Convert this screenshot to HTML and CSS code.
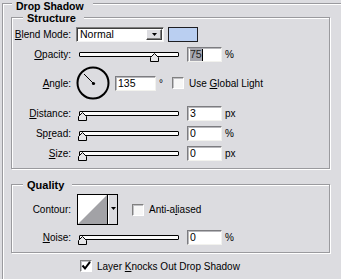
FILE: index.html
```html
<!DOCTYPE html>
<html>
<head>
<meta charset="utf-8">
<link rel="stylesheet" href="styles.css">
</head>
<body>
<div class="panel">
  <div class="group outer">
    <div class="legend l-outer">Drop Shadow</div>

    <div class="group sub structure">
      <div class="legend l-sub">Structure</div>

      <div class="row r-blend">
        <span class="lbl"><u>B</u>lend Mode:</span>
        <div class="select">
          <span class="sel-text">Normal</span>
          <span class="sel-btn"><svg width="5" height="3" viewBox="0 0 5 3"><path d="M0 0H5L2.5 3Z" fill="#000"/></svg></span>
        </div>
        <div class="swatch"></div>
      </div>

      <div class="row r-opacity">
        <span class="lbl"><u>O</u>pacity:</span>
        <div class="slider">
          <div class="track"></div>
          <svg class="thumb" style="left:71px" width="9" height="9" viewBox="0 0 9 9"><path d="M0.5 8.5V4.5L4.5 0.5L8.5 4.5V8.5Z" fill="#e6e6e8" stroke="#000"/></svg>
        </div>
        <div class="field"><span class="hl">75</span><span class="caret"></span></div>
        <span class="unit">%</span>
      </div>

      <div class="row r-angle">
        <span class="lbl"><u>A</u>ngle:</span>
        <svg class="dial" width="34" height="34" viewBox="0 0 34 34">
          <circle cx="17" cy="17" r="15.5" fill="none" stroke="#000" stroke-width="2"/>
          <line x1="17.5" y1="17.5" x2="8" y2="8" stroke="#000" stroke-width="1"/>
          <circle cx="17.5" cy="17.5" r="1.6" fill="#000"/>
        </svg>
        <div class="field f-angle">135</div>
        <span class="deg">°</span>
        <span class="check c-global"></span>
        <span class="ctext">Use <u>G</u>lobal Light</span>
      </div>

      <div class="row r-dist">
        <span class="lbl"><u>D</u>istance:</span>
        <div class="slider">
          <div class="track"></div>
          <svg class="thumb" style="left:-1px" width="9" height="9" viewBox="0 0 9 9"><path d="M0.5 8.5V4.5L4.5 0.5L8.5 4.5V8.5Z" fill="#e6e6e8" stroke="#000"/></svg>
        </div>
        <div class="field">3</div>
        <span class="unit">px</span>
      </div>

      <div class="row r-spread">
        <span class="lbl">Sp<u>r</u>ead:</span>
        <div class="slider">
          <div class="track"></div>
          <svg class="thumb" style="left:-1px" width="9" height="9" viewBox="0 0 9 9"><path d="M0.5 8.5V4.5L4.5 0.5L8.5 4.5V8.5Z" fill="#e6e6e8" stroke="#000"/></svg>
        </div>
        <div class="field">0</div>
        <span class="unit">%</span>
      </div>

      <div class="row r-size">
        <span class="lbl"><u>S</u>ize:</span>
        <div class="slider">
          <div class="track"></div>
          <svg class="thumb" style="left:-1px" width="9" height="9" viewBox="0 0 9 9"><path d="M0.5 8.5V4.5L4.5 0.5L8.5 4.5V8.5Z" fill="#e6e6e8" stroke="#000"/></svg>
        </div>
        <div class="field">0</div>
        <span class="unit">px</span>
      </div>
    </div>

    <div class="group sub quality">
      <div class="legend l-sub l-quality">Quality</div>

      <div class="row r-contour">
        <span class="lbl">Contour:</span>
        <div class="contour">
          <svg class="curve" width="29" height="29" viewBox="0 0 29 29"><rect width="29" height="29" fill="#fff"/><path d="M0 29L29 0V29Z" fill="#a2a2a6"/></svg>
          <span class="c-btn"><svg width="5" height="3" viewBox="0 0 5 3"><path d="M0 0H5L2.5 3Z" fill="#000"/></svg></span>
        </div>
        <span class="check c-anti"></span>
        <span class="ctext">Anti-a<u>l</u>iased</span>
      </div>

      <div class="row r-noise">
        <span class="lbl"><u>N</u>oise:</span>
        <div class="slider">
          <div class="track"></div>
          <svg class="thumb" style="left:-1px" width="9" height="9" viewBox="0 0 9 9"><path d="M0.5 8.5V4.5L4.5 0.5L8.5 4.5V8.5Z" fill="#e6e6e8" stroke="#000"/></svg>
        </div>
        <div class="field">0</div>
        <span class="unit">%</span>
      </div>
    </div>

    <div class="row r-knock">
      <span class="check checked"><svg width="10" height="10" viewBox="0 0 10 10"><path d="M1.5 4.5L4 7.5L9 0.8" fill="none" stroke="#000" stroke-width="2"/></svg></span>
      <span class="ctext">Layer <u>K</u>nocks Out Drop Shadow</span>
    </div>
  </div>
</div>
</body>
</html>
```

FILE: styles.css
```css
html, body {
  margin: 0;
  padding: 0;
  background: #dcdce0;
  overflow: hidden;
}

body {
  font-family: "Liberation Sans", Arial, sans-serif;
  font-size: 10px;
  color: #000;
  width: 341px;
  height: 279px;
}

.panel {
  padding: 3px 0 0 2px;
}

.group {
  display: flex;
  flex-direction: column;
  border: 1px solid #9a9a9e;
  box-shadow: inset 1px 1px 0 #fff, 1px 1px 0 #fff;
}

.outer {
  width: 400px;
  min-height: 300px;
  box-sizing: border-box;
}

.sub {
  width: 319px;
  box-sizing: border-box;
  margin-left: 8px;
}

.structure {
  margin-top: 13px;
  padding-bottom: 7px;
}

.quality {
  margin-top: 15px;
  padding-bottom: 7px;
}

.legend {
  align-self: flex-start;
  height: 13px;
  line-height: 13px;
  margin-top: -6px;
  margin-bottom: -7px;
  background: #dcdce0;
  font-weight: bold;
  font-size: 11px;
  white-space: nowrap;
}

.l-outer {
  font-size: 10.5px;
  height: 12px;
  line-height: 12px;
  margin-top: -4px;
  margin-bottom: -8px;
  margin-left: 9px;
  padding: 0 9px 0 4px;
}

.l-sub {
  margin-left: 11px;
  padding: 0 8px 0 4px;
}

.l-quality {
  padding-right: 8px;
}

.row {
  display: flex;
  align-items: center;
  height: 15px;
  white-space: nowrap;
}

.lbl {
  width: 59px;
  flex: none;
  text-align: right;
  line-height: 15px;
}

u {
  text-decoration-thickness: 1px;
  text-underline-offset: 1px;
}

.r-blend { margin-top: 9px; }
.r-opacity { margin-top: 5px; }
.r-angle { margin-top: 4px; height: 34px; }
.r-dist { margin-top: 6px; }
.r-spread { margin-top: 5px; }
.r-size { margin-top: 5px; }
.r-contour { margin-top: 9px; height: 31px; }
.r-noise { margin-top: 5px; }
.r-knock { margin-top: 7px; height: 12px; padding-left: 77px; }

/* select */
.select {
  margin-left: 5px;
  width: 88px;
  height: 15px;
  box-sizing: border-box;
  display: flex;
  align-items: center;
  background: #fff;
  border: 1px solid;
  border-color: #808080 #f4f4f4 #f4f4f4 #808080;
  box-shadow: inset 1px 1px 0 #404040;
}

.sel-text {
  flex: 1;
  padding-left: 3px;
  line-height: 13px;
  font-size: 10.5px;
}

.sel-btn {
  width: 16px;
  height: 11px;
  box-sizing: border-box;
  margin-right: 1px;
  display: flex;
  align-items: center;
  justify-content: center;
  background: #dcdce0;
  border: 1px solid;
  border-color: #fff #404040 #404040 #fff;
  box-shadow: inset -1px -1px 0 #808080;
}

.swatch {
  margin-left: 4px;
  width: 30px;
  height: 15px;
  box-sizing: border-box;
  background: #bacff1;
  border: 1px solid #1e1e22;
}

/* slider */
.slider {
  position: relative;
  margin-left: 8px;
  width: 100px;
  height: 5px;
  flex: none;
}

.track {
  height: 5px;
  box-sizing: border-box;
  border: 1px solid #000;
  border-radius: 1px;
  background: #fbfbfb;
}

.thumb {
  position: absolute;
  top: 1px;
}

/* fields */
.field {
  margin-left: 8px;
  width: 35px;
  height: 15px;
  box-sizing: border-box;
  flex: none;
  display: flex;
  align-items: center;
  padding-left: 2px;
  background: #fff;
  border: 1px solid;
  border-color: #7c7c80 #f2f2ee #f2f2ee #7c7c80;
  box-shadow: inset 1px 1px 0 #b8b8bc;
  line-height: 13px;
  font-size: 10.5px;
}

.hl {
  background: #a6a6ae;
  color: #202020;
  line-height: 13px;
}

.caret {
  display: inline-block;
  width: 1px;
  height: 12px;
  background: #000;
}

.unit {
  margin-left: 3px;
  line-height: 15px;
}

/* angle */
.dial {
  margin-left: 5px;
  flex: none;
}

.f-angle {
  margin-left: 5px;
  width: 41px;
}

.deg {
  margin-left: 3px;
  line-height: 15px;
}

.check {
  width: 12px;
  height: 12px;
  box-sizing: border-box;
  flex: none;
  background: #f7f7f7;
  border: 1px solid;
  border-color: #808080 #ffffff #ffffff #808080;
  box-shadow: inset 1px 1px 0 #c0c0c4;
  display: flex;
  align-items: center;
  justify-content: center;
}

.checked {
  background: #fff;
}

.c-global { margin-left: 9px; }
.c-anti { margin-left: 14px; }

.ctext {
  margin-left: 5px;
  line-height: 15px;
}

/* contour */
.contour {
  margin-left: 6px;
  width: 41px;
  height: 31px;
  box-sizing: border-box;
  flex: none;
  display: flex;
  border: 1px solid #000;
  background: #dcdce0;
}

.curve {
  display: block;
  border-right: 1px solid #000;
}

.c-btn {
  flex: 1;
  display: flex;
  justify-content: center;
  padding-top: 12px;
  box-sizing: border-box;
  border-left: 1px solid #fff;
  background: #dcdce0;
}

.c-btn svg {
  display: block;
}
```
